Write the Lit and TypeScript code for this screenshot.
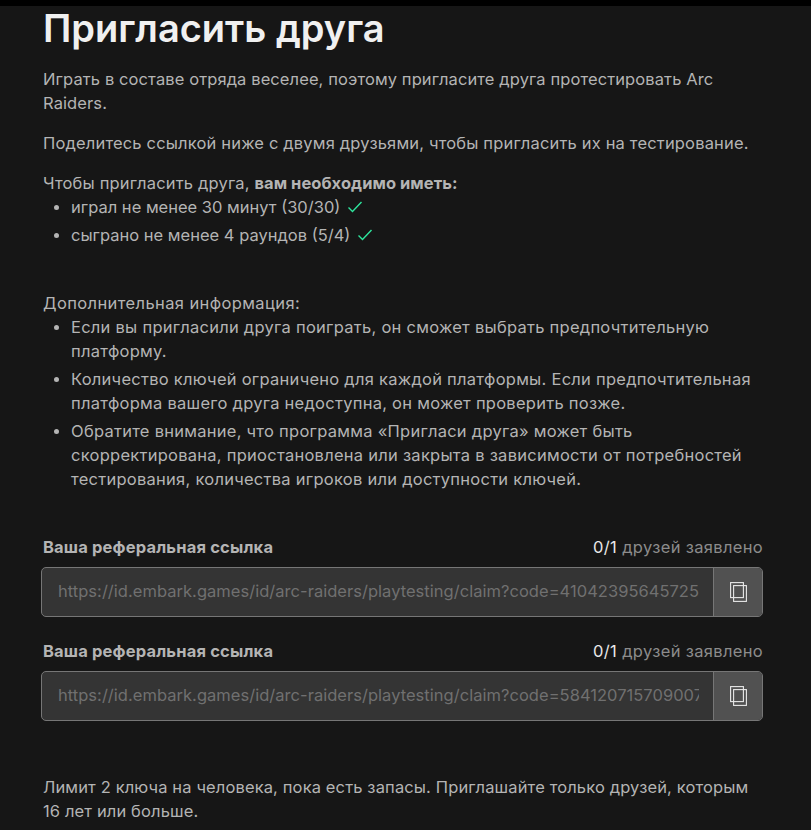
import { LitElement, html, css, svg } from "lit";
import { customElement } from "lit/decorators.js";

const check = svg`<svg class="check" viewBox="0 0 16 14" width="16" height="14" fill="none"><path d="M1.5 7.5 5.5 11.5 14.5 2" stroke="#2ee59d" stroke-width="1.4"/></svg>`;
const copy = svg`<svg viewBox="0 0 17 20" width="17" height="20" fill="none" stroke="#e8e8e8" stroke-width="1.1"><rect x="0.6" y="0.6" width="12.8" height="15"/><rect x="3.6" y="3.6" width="12.8" height="15.8"/></svg>`;

@customElement("app-root")
export class AppRoot extends LitElement {
  static styles = css`
    :host { display: block; width: 811px; height: 830px; overflow: hidden; background: #161616; font-family: "Inter", "Liberation Sans", sans-serif; font-size: 16.5px; letter-spacing: 0.17px; line-height: 24px; color: #b4b4b4; }
    .strip { height: 6px; background: #000; }
    .page { padding: 0 48px 0 43px; }
    h1 { margin: 0; font-size: 38px; line-height: 44px; font-weight: 600; letter-spacing: 0; color: #f0f0f0; }
    p { margin: 0; }
    .intro { margin-top: 17px; letter-spacing: 0.1px; }
    .share { margin-top: 16px; }
    .need { margin-top: 16px; }
    b { font-weight: 700; letter-spacing: 0.05px; }
    ul { margin: 0; padding: 0 0 0 28px; list-style: none; }
    .reqs { letter-spacing: 0; }
    .more { letter-spacing: 0.26px; }
    li { position: relative; margin-bottom: 4px; }
    li::before { content: ""; position: absolute; left: -17px; top: 10px; width: 5px; height: 5px; border-radius: 50%; background: #b4b4b4; }
    .check { vertical-align: -1px; margin-left: 2px; }
    .info { margin-top: 44px; letter-spacing: 0.39px; }
    .refs { margin-top: 44px; display: flex; flex-direction: column; gap: 22px; }
    .head { display: flex; justify-content: space-between; align-items: center; height: 24px; margin-bottom: 8px; }
    .label { font-weight: 700; }
    .count { color: #8c8c8c; letter-spacing: 0.33px; }
    .count span { color: #e8e8e8; }
    .field { display: flex; height: 50px; margin-left: -2px; box-sizing: border-box; border: 1px solid #767676; border-radius: 5px; background: #343434; overflow: hidden; }
    .url { flex: 1; min-width: 0; margin-right: 14px; padding: 0 0 2px 16px; border: 0; outline: 0; background: transparent; font: inherit; letter-spacing: 0.03px; color: #707070; }
    .btn { width: 48px; flex: none; display: flex; align-items: center; justify-content: center; background: #515151; border-left: 1px solid #767676; }
    .limit { margin-top: 54px; letter-spacing: 0.13px; }
  `;

  private ref(url: string) {
    return html`<div>
      <div class="head"><div class="label">Ваша реферальная ссылка</div><div class="count"><span>0/1</span> друзей заявлено</div></div>
      <div class="field"><input class="url" readonly .value=${url} /><div class="btn">${copy}</div></div>
    </div>`;
  }

  render() {
    return html`<div class="strip"></div><div class="page">
      <h1>Пригласить друга</h1>
      <p class="intro">Играть в составе отряда веселее, поэтому пригласите друга протестировать Arc Raiders.</p>
      <p class="share">Поделитесь ссылкой ниже с двумя друзьями, чтобы пригласить их на тестирование.</p>
      <p class="need">Чтобы пригласить друга, <b>вам необходимо иметь:</b></p>
      <ul class="reqs">
        <li>играл не менее 30 минут (30/30) ${check}</li>
        <li>сыграно не менее 4 раундов (5/4) ${check}</li>
      </ul>
      <p class="info">Дополнительная информация:</p>
      <ul class="more">
        <li>Если вы пригласили друга поиграть, он сможет выбрать предпочтительную платформу.</li>
        <li>Количество ключей ограничено для каждой платформы. Если предпочтительная платформа вашего друга недоступна, он может проверить позже.</li>
        <li>Обратите внимание, что программа «Пригласи друга» может быть скорректирована, приостановлена или закрыта в зависимости от потребностей тестирования, количества игроков или доступности ключей.</li>
      </ul>
      <div class="refs">
        ${this.ref("https://id.embark.games/id/arc-raiders/playtesting/claim?code=41042395645725481")}
        ${this.ref("https://id.embark.games/id/arc-raiders/playtesting/claim?code=58412071570900712")}
      </div>
      <p class="limit">Лимит 2 ключа на человека, пока есть запасы. Приглашайте только друзей, которым 16 лет или больше.</p>
    </div>`;
  }
}
